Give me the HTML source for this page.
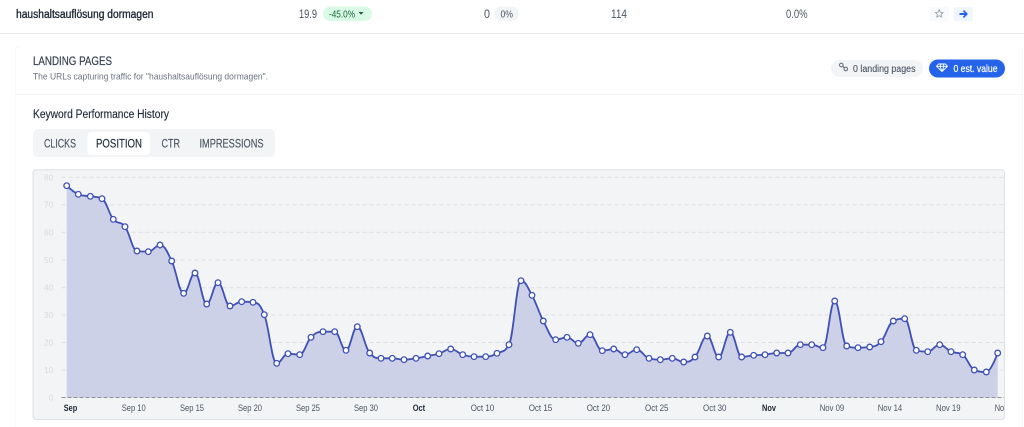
<!DOCTYPE html>
<html><head><meta charset="utf-8"><style>
html,body{margin:0;padding:0;background:#fff;width:1024px;height:427px;overflow:hidden}
svg{display:block;font-family:"Liberation Sans",sans-serif;filter:blur(.3px)}
</style></head><body>
<svg id="s" xmlns="http://www.w3.org/2000/svg" width="1024" height="427" viewBox="0 0 1024 427">
<rect width="1024" height="427" fill="#fff"/>
<rect x="0" y="33" width="1024" height="1" fill="#e9eaed"/>
<path d="M15.5 94V51q0-4 4-4" fill="none" stroke="#f8f8fa"/>
<rect x="15" y="94" width="1007" height="1" fill="#f3f4f6"/>
<rect x="1022" y="47" width="1" height="380" fill="#f9f9fb"/>
<rect x="15" y="94" width="1" height="333" fill="#fbfbfc"/>

<g font-size="11.500">
<text x="16" y="18" font-size="11.500" fill="#1f2937" stroke="#1f2937" stroke-width=".35" textLength="137.500" lengthAdjust="spacingAndGlyphs">haushaltsauflösung dormagen</text>
<text x="299" y="18" fill="#4b5563" textLength="18" lengthAdjust="spacingAndGlyphs">19.9</text>
<rect x="323" y="6.500" width="49" height="14.500" rx="7.250" fill="#d9fbe6"/>
<text x="329" y="17.500" font-size="10.500" fill="#166534" textLength="26" lengthAdjust="spacingAndGlyphs">-45.0%</text>
<path d="M358.500 12h5l-2.500 2.800z" fill="#166534"/>
<text x="484" y="18" fill="#4b5563" textLength="6" lengthAdjust="spacingAndGlyphs">0</text>
<rect x="494" y="6.500" width="25" height="14.500" rx="7.250" fill="#f3f4f6"/>
<text x="500.500" y="17.500" font-size="10.500" fill="#4b5563" textLength="12.500" lengthAdjust="spacingAndGlyphs">0%</text>
<text x="611" y="18" fill="#4b5563" textLength="16" lengthAdjust="spacingAndGlyphs">114</text>
<text x="786" y="18" fill="#4b5563" textLength="21.500" lengthAdjust="spacingAndGlyphs">0.0%</text>
</g>
<rect x="929.500" y="7" width="19.500" height="14" rx="2" fill="#f9fafb"/>
<path d="M939.200 9.700l1.150 2.500 2.700.3-2 1.850.55 2.700-2.400-1.350-2.400 1.350.55-2.700-2-1.850 2.700-.3z" fill="none" stroke="#9ca3af" stroke-width=".9"/>
<rect x="954" y="7" width="19" height="14.500" rx="2" fill="#eff6ff"/>
<path d="M964 10l4 4-4 4-1.200-1.200 1.800-1.800H959.500v-2h5.100l-1.800-1.800z" fill="#2563eb"/>

<text x="33" y="65" font-size="11.500" fill="#374151" stroke="#374151" stroke-width=".2" textLength="79" lengthAdjust="spacingAndGlyphs">LANDING PAGES</text>
<text x="33" y="79.500" font-size="9.500" fill="#6b7280" textLength="235" lengthAdjust="spacingAndGlyphs">The URLs capturing traffic for "haushaltsauflösung dormagen".</text>

<rect x="831" y="60" width="92" height="17" rx="8.500" fill="#f3f4f6"/>
<g fill="none" stroke="#6b7280" stroke-width="1.100">
<circle cx="841.300" cy="65" r="1.800"/><circle cx="845.800" cy="69" r="1.800"/><path d="M842.800 66.300l1.500 1.400"/>
</g>
<text x="853" y="72" font-size="10" fill="#4b5563" stroke="#4b5563" stroke-width=".12" textLength="62.500" lengthAdjust="spacingAndGlyphs">0 landing pages</text>
<rect x="929" y="59.500" width="76" height="18" rx="9" fill="#2563eb"/>
<path d="M938.500 64h7l2 2.300-5.500 5.200-5.500-5.200z M936.800 66.300h10.400 M940 66.300l2 5 2-5 M940 66.300l1-2.300 M944 66.300l-1-2.300" fill="none" stroke="#fff" stroke-width=".9" stroke-linejoin="round"/>
<text x="953.500" y="72" font-size="10" fill="#fff" stroke="#fff" stroke-width=".2" textLength="44" lengthAdjust="spacingAndGlyphs">0 est. value</text>

<text x="33" y="118" font-size="11.500" fill="#1f2937" stroke="#1f2937" stroke-width=".15" textLength="136" lengthAdjust="spacingAndGlyphs">Keyword Performance History</text>

<rect x="33" y="129" width="242" height="28" rx="5" fill="#f3f4f6"/>
<rect x="87.500" y="132" width="62.500" height="23" rx="3.500" fill="#fff"/>
<g font-size="11.500" fill="#4b5563" stroke="#4b5563" stroke-width=".15">
<text x="44" y="147.500" textLength="32" lengthAdjust="spacingAndGlyphs">CLICKS</text>
<text x="96" y="147.500" fill="#1f2937" stroke="#1f2937" textLength="46" lengthAdjust="spacingAndGlyphs">POSITION</text>
<text x="161.500" y="147.500" textLength="18.500" lengthAdjust="spacingAndGlyphs">CTR</text>
<text x="199.500" y="147.500" textLength="64" lengthAdjust="spacingAndGlyphs">IMPRESSIONS</text>
</g>

<rect x="33" y="169.800" width="971.500" height="249.700" rx="3" fill="#f3f4f6" stroke="#dfe1e5" stroke-width="1"/>

<g fill="none" stroke="#dedfe3" stroke-width="1" stroke-dasharray="4 3">
<path d="M61.500 177.300H1004M61.500 204.700H1004M61.500 232.300H1004M61.500 260H1004M61.500 287.700H1004M61.500 315H1004M61.500 342.500H1004M61.500 370H1004"/>
</g>
<g font-size="8.500" fill="#d8dade" text-anchor="end">
<text x="53.500" y="180.300">80</text><text x="53.500" y="207.700">70</text><text x="53.500" y="235.300">60</text><text x="53.500" y="263">50</text><text x="53.500" y="290.700">40</text><text x="53.500" y="318">30</text><text x="53.500" y="345.500">20</text><text x="53.500" y="373">10</text><text x="53.500" y="400.300">0</text>
</g>

<path id="area" fill="#cdd1e8" d="M66.700 397.500L66.700 185.700 78.300 194.300 90.300 196.300 102 198.700 113.300 219.300 125 226.700 137 251 148.300 251.700 160 245 171.700 261 183.700 293.300 195 273 206.700 304 218 282.700 230 306 241.700 301.700 253 302.300 264.300 314.700 276.700 363.300 288 353.700 299.700 354.700 311 337.300 323 331.700 334.700 331.700 346 350.300 357.300 326.700 369.700 353 381 358.300 392.300 358.300 404 359.700 416 358.300 427.700 356 439 353.700 450.700 349 462.700 354.700 474 356.700 485.700 356.700 497 353.300 509 344.700 521 280.700 532 295.300 543.300 321 555.700 339.700 567 337.300 578.300 343.300 590 334.700 602.300 350.700 613.700 349 625 354.700 636.700 349.700 649 358.300 660.300 359.700 672.300 358.300 683.700 362 695 357 707.300 336 718.700 357 730.300 332.300 741.700 357 753.700 355.300 765 354.700 776.700 353 788 353 800.300 344.700 811.700 344.700 823 347.700 834.700 301 846.700 346 858 347.700 869.700 347 881 341.700 893.300 321 904.700 318.700 916.300 350.300 927.700 351.700 939.700 344.700 951 351.700 962.700 354.700 974.300 370 986.300 372 997.700 353 997.700 397.500z"/>
<path d="M61.500 397.500H1004" fill="none" stroke="#8f9196" stroke-width="1" stroke-dasharray="4 2"/>
<path id="line" fill="none" stroke="#3f51b5" stroke-width="1.800" stroke-linejoin="round" d="M66.700 185.700L78.300 194.300 90.300 196.300 102 198.700 113.300 219.300 125 226.700 137 251 148.300 251.700 160 245 171.700 261 183.700 293.300 195 273 206.700 304 218 282.700 230 306 241.700 301.700 253 302.300 264.300 314.700 276.700 363.300 288 353.700 299.700 354.700 311 337.300 323 331.700 334.700 331.700 346 350.300 357.300 326.700 369.700 353 381 358.300 392.300 358.300 404 359.700 416 358.300 427.700 356 439 353.700 450.700 349 462.700 354.700 474 356.700 485.700 356.700 497 353.300 509 344.700 521 280.700 532 295.300 543.300 321 555.700 339.700 567 337.300 578.300 343.300 590 334.700 602.300 350.700 613.700 349 625 354.700 636.700 349.700 649 358.300 660.300 359.700 672.300 358.300 683.700 362 695 357 707.300 336 718.700 357 730.300 332.300 741.700 357 753.700 355.300 765 354.700 776.700 353 788 353 800.300 344.700 811.700 344.700 823 347.700 834.700 301 846.700 346 858 347.700 869.700 347 881 341.700 893.300 321 904.700 318.700 916.300 350.300 927.700 351.700 939.700 344.700 951 351.700 962.700 354.700 974.300 370 986.300 372 997.700 353"/>
<g id="dots" fill="#fff" stroke="#3f51b5" stroke-width="1.300"></g>

<g font-size="9" fill="#4b5563">
<text x="63.700" y="411" font-weight="700" fill="#1f2937" textLength="13.500" lengthAdjust="spacingAndGlyphs">Sep</text>
<text x="121.700" y="411" textLength="24" lengthAdjust="spacingAndGlyphs">Sep 10</text>
<text x="180" y="411" textLength="24" lengthAdjust="spacingAndGlyphs">Sep 15</text>
<text x="238" y="411" textLength="24" lengthAdjust="spacingAndGlyphs">Sep 20</text>
<text x="296" y="411" textLength="24" lengthAdjust="spacingAndGlyphs">Sep 25</text>
<text x="354" y="411" textLength="24" lengthAdjust="spacingAndGlyphs">Sep 30</text>
<text x="412.700" y="411" font-weight="700" fill="#1f2937" textLength="12.500" lengthAdjust="spacingAndGlyphs">Oct</text>
<text x="470.700" y="411" textLength="23.500" lengthAdjust="spacingAndGlyphs">Oct 10</text>
<text x="528.700" y="411" textLength="23.500" lengthAdjust="spacingAndGlyphs">Oct 15</text>
<text x="586.700" y="411" textLength="23.500" lengthAdjust="spacingAndGlyphs">Oct 20</text>
<text x="645" y="411" textLength="23.500" lengthAdjust="spacingAndGlyphs">Oct 25</text>
<text x="703" y="411" textLength="23.500" lengthAdjust="spacingAndGlyphs">Oct 30</text>
<text x="762" y="411" font-weight="700" fill="#1f2937" textLength="14" lengthAdjust="spacingAndGlyphs">Nov</text>
<text x="819.700" y="411" textLength="24.500" lengthAdjust="spacingAndGlyphs">Nov 09</text>
<text x="877.700" y="411" textLength="24.500" lengthAdjust="spacingAndGlyphs">Nov 14</text>
<text x="936" y="411" textLength="24.500" lengthAdjust="spacingAndGlyphs">Nov 19</text>
<text x="994.700" y="411" textLength="9.500" lengthAdjust="spacingAndGlyphs">No</text>
</g>
</svg>
<script>
(function(){
var d=document.getElementById('line').getAttribute('d').replace('M','').replace('L',' ').trim().split(/\s+/).map(Number),p=[],i;
for(i=0;i<d.length;i+=2)p.push([d[i],d[i+1]]);
var c=[];
for(i=0;i<p.length;i++){
 var a=p[i-1],b=p[i],n=p[i+1],x=b[0],y=b[1];
 if(!a||!n){c.push([x,y,x,y]);continue;}
 var lx=(1.5*x+a[0])/2.5,ly=(1.5*y+a[1])/2.5,rx=(1.5*x+n[0])/2.5,ry=(1.5*y+n[1])/2.5;
 var k=((ry-ly)*(rx-x))/(rx-lx)+y-ry;ly+=k;ry+=k;
 if(ly>a[1]&&ly>y){ly=Math.max(a[1],y);ry=2*y-ly;}else if(ly<a[1]&&ly<y){ly=Math.min(a[1],y);ry=2*y-ly;}
 if(ry>n[1]&&ry>y){ry=Math.max(n[1],y);ly=2*y-ry;}else if(ry<n[1]&&ry<y){ry=Math.min(n[1],y);ly=2*y-ry;}
 c.push([lx,ly,rx,ry]);
}
var s='M'+p[0][0]+' '+p[0][1];
for(i=1;i<p.length;i++){s+='C'+c[i-1][2].toFixed(2)+' '+c[i-1][3].toFixed(2)+' '+c[i][0].toFixed(2)+' '+c[i][1].toFixed(2)+' '+p[i][0]+' '+p[i][1];}
document.getElementById('line').setAttribute('d',s);
document.getElementById('area').setAttribute('d',s+'L997.7 397.5L66.7 397.5z');
var g=document.getElementById('dots');
for(i=0;i<p.length;i++){var e=document.createElementNS('http://www.w3.org/2000/svg','circle');e.setAttribute('cx',p[i][0]);e.setAttribute('cy',p[i][1]);e.setAttribute('r','2.8');g.appendChild(e);}
})();
</script>
</body></html>
